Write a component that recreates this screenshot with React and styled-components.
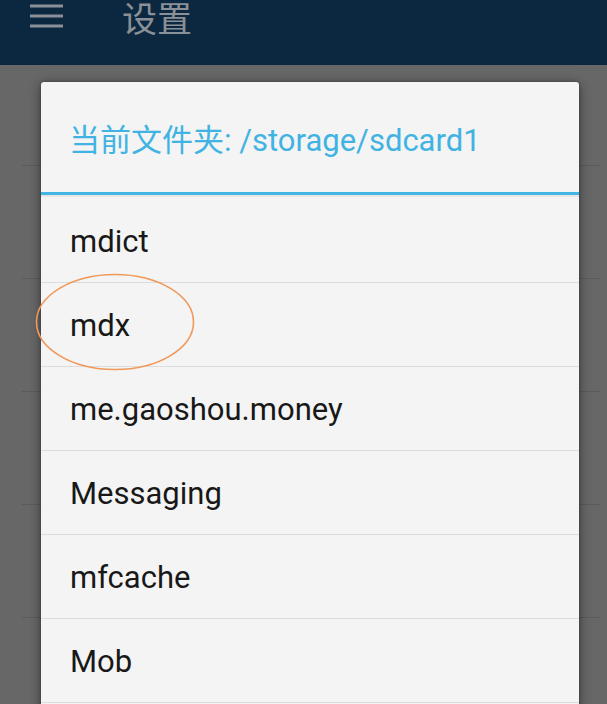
import React from 'react';
import styled, { createGlobalStyle } from 'styled-components';

const GlobalStyle = createGlobalStyle`
  body {
    margin: 0;
    background-color: #676767;
    font-family: Roboto, "Noto Sans CJK SC", sans-serif;
    overflow: hidden;
  }
`;

const StyledScreen = styled.div`
  position: relative;
  width: 607px;
  height: 704px;
  overflow: hidden;
  background-color: #676767;
`;

const AppBar = styled.header`
  display: flex;
  align-items: flex-start;
  height: 65px;
  padding-left: 30px;
  background-color: #0c2740;
  color: #8a9097;
`;

const MenuIcon = styled.svg`
  width: 33px;
  height: 30px;
  margin-top: 3px;
  flex-shrink: 0;
`;

const BarTitle = styled.h1`
  margin: -3px 0 0 59px;
  font-family: "Noto Sans CJK SC", sans-serif;
  font-size: 35px;
  font-weight: 400;
  line-height: 40px;
  letter-spacing: 0;
`;

// the settings list behind the dimmed overlay, only its dividers peek out
const SettingsList = styled.div`
  display: flex;
  flex-direction: column;
  margin: 0 7px 0 22px;
`;

const SettingsRow = styled.div`
  height: ${(p) => p.h}px;
  border-bottom: 1px solid #5b5b5b;
`;

const Dialog = styled.div`
  position: absolute;
  top: 82px;
  left: 41px;
  width: 538px;
  height: 640px;
  background-color: #f4f4f4;
  border-radius: 3px;
  box-shadow: 0 2px 12px rgba(0, 0, 0, 0.45), 0 0 3px rgba(0, 0, 0, 0.3);
`;

const DialogTitle = styled.div`
  display: flex;
  align-items: center;
  height: 110px;
  padding-left: 28px;
  font-size: 31px;
  color: #41b3e3;
  white-space: nowrap;
`;

const TitleRule = styled.div`
  height: 3px;
  background-color: #43b5e4;
  border-bottom: 2px solid #e6e6e6;
`;

const FileList = styled.ul`
  list-style: none;
  margin: 0;
  padding: 2px 0 0;
`;

const FileRow = styled.li`
  position: relative;
  display: flex;
  align-items: center;
  height: 84px;
  padding: 2px 0 0 29px;
  box-sizing: border-box;
  border-bottom: 1px solid #dcdcdc;
  font-size: 31px;
  color: #181818;
`;

const Circle = styled.svg`
  position: absolute;
  left: -7px;
  top: -11px;
  width: 162px;
  height: 100px;
  pointer-events: none;
`;

const folders = ['mdict', 'mdx', 'me.gaoshou.money', 'Messaging', 'mfcache', 'Mob'];

function App() {
  return (
    <StyledScreen>
      <GlobalStyle />
      <AppBar>
        <MenuIcon viewBox="0 0 33 30">
          <rect x="0" y="1.5" width="33" height="3" fill="currentColor" />
          <rect x="0" y="11.5" width="33" height="3" fill="currentColor" />
          <rect x="0" y="21.5" width="33" height="3" fill="currentColor" />
        </MenuIcon>
        <BarTitle>设置</BarTitle>
      </AppBar>

      <SettingsList>
        {[100, 112, 112, 112, 112].map((h, i) => (
          <SettingsRow key={i} h={h} />
        ))}
      </SettingsList>

      <Dialog>
        <DialogTitle>当前文件夹: /storage/sdcard1</DialogTitle>
        <TitleRule />
        <FileList>
          {folders.map((name) => (
            <FileRow key={name}>
              {name}
              {name === 'mdx' && (
                <Circle viewBox="0 0 162 100">
                  <ellipse
                    cx="81"
                    cy="50"
                    rx="78.5"
                    ry="47.5"
                    fill="none"
                    stroke="#f0995a"
                    strokeWidth="1.6"
                  />
                </Circle>
              )}
            </FileRow>
          ))}
        </FileList>
      </Dialog>
    </StyledScreen>
  );
}

export default App;
